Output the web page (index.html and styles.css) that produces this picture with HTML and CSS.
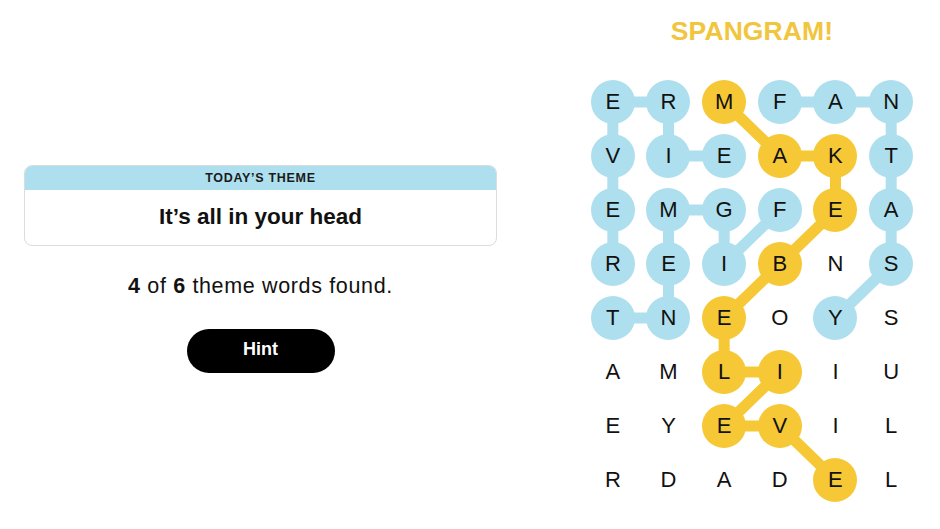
FILE: index.html
```html
<!DOCTYPE html>
<html lang="en">
<head>
<meta charset="utf-8">
<title>Strands</title>
<link rel="stylesheet" href="styles.css">
</head>
<body>
<main class="page">
  <section class="side">
    <div class="theme-card">
      <div class="theme-head">TODAY’S THEME</div>
      <div class="theme-body">It’s all in your head</div>
    </div>
    <p class="progress"><b>4</b> of <b>6</b> theme words found.</p>
    <button class="hint" type="button">Hint</button>
  </section>
  <section class="board">
    <h2 class="found-label">SPANGRAM!</h2>
    <div class="grid-wrap">
      <svg class="links" viewBox="0 0 334 432" width="334" height="432" aria-hidden="true">
        <g fill="none" stroke-width="11" stroke-linejoin="round" stroke-linecap="round">
          <polyline class="ln-blue" points="27.83,189 27.83,135 27.83,81 27.83,27 83.5,27 83.5,81 139.17,81"/>
          <polyline class="ln-blue" points="194.83,135 139.17,189 139.17,135 83.5,135 83.5,189 83.5,243 27.83,243"/>
          <polyline class="ln-blue" points="194.83,27 250.5,27 306.17,27 306.17,81 306.17,135 306.17,189 250.5,243"/>
          <polyline class="ln-gold" points="139.17,27 194.83,81 250.5,81 250.5,135 194.83,189 139.17,243 139.17,297 194.83,297 139.17,351 194.83,351 250.5,405"/>
        </g>
      </svg>
      <div class="grid">
        <span class="cell blue">E</span><span class="cell blue">R</span><span class="cell gold">M</span><span class="cell blue">F</span><span class="cell blue">A</span><span class="cell blue">N</span>
        <span class="cell blue">V</span><span class="cell blue">I</span><span class="cell blue">E</span><span class="cell gold">A</span><span class="cell gold">K</span><span class="cell blue">T</span>
        <span class="cell blue">E</span><span class="cell blue">M</span><span class="cell blue">G</span><span class="cell blue">F</span><span class="cell gold">E</span><span class="cell blue">A</span>
        <span class="cell blue">R</span><span class="cell blue">E</span><span class="cell blue">I</span><span class="cell gold">B</span><span class="cell">N</span><span class="cell blue">S</span>
        <span class="cell blue">T</span><span class="cell blue">N</span><span class="cell gold">E</span><span class="cell">O</span><span class="cell blue">Y</span><span class="cell">S</span>
        <span class="cell">A</span><span class="cell">M</span><span class="cell gold">L</span><span class="cell gold">I</span><span class="cell">I</span><span class="cell">U</span>
        <span class="cell">E</span><span class="cell">Y</span><span class="cell gold">E</span><span class="cell gold">V</span><span class="cell">I</span><span class="cell">L</span>
        <span class="cell">R</span><span class="cell">D</span><span class="cell">A</span><span class="cell">D</span><span class="cell gold">E</span><span class="cell">L</span>
      </div>
    </div>
  </section>
</main>
</body>
</html>
```
FILE: styles.css
```css
* { box-sizing: border-box; }
html, body { margin: 0; padding: 0; background: #fff; }
body {
  font-family: "Liberation Sans", Arial, sans-serif;
  color: #121212;
  width: 940px;
  height: 529px;
  overflow: hidden;
}
.page {
  display: flex;
  height: 529px;
}
.side {
  width: 521px;
  padding: 165px 24px 0;
  display: flex;
  flex-direction: column;
  align-items: center;
}
.theme-card {
  width: 473px;
  border: 1px solid #dcdcdc;
  border-radius: 8px;
  overflow: hidden;
}
.theme-head {
  background: #aedfee;
  height: 24px;
  line-height: 25px;
  text-align: center;
  font-size: 12.5px;
  font-weight: 700;
  letter-spacing: 0.7px;
  color: #1a1a1a;
}
.theme-body {
  height: 55px;
  line-height: 54px;
  text-align: center;
  font-size: 22.5px;
  font-weight: 700;
  color: #111;
}
.progress {
  margin: 26px 0 0;
  font-size: 21.5px;
  line-height: 28px;
  color: #111;
  letter-spacing: 0.65px;
}
.progress b { font-weight: 700; }
.hint {
  margin-top: 29px;
  width: 148px;
  height: 44px;
  border: none;
  border-radius: 22px;
  background: #000;
  color: #fff;
  font-family: "Liberation Sans", Arial, sans-serif;
  font-size: 18px;
  font-weight: 700;
  padding: 0 0 3px;
}
.board {
  margin-left: 64px;
  width: 334px;
  display: flex;
  flex-direction: column;
  align-items: center;
}
.found-label {
  margin: 16px 0 0;
  height: 59px;
  font-size: 26.5px;
  line-height: 31px;
  font-weight: 700;
  color: #f1c53d;
  letter-spacing: 0.1px;
}
.grid-wrap {
  position: relative;
  width: 334px;
  height: 432px;
}
.links {
  position: absolute;
  left: 0;
  top: 0;
}
.ln-blue { stroke: #aedfee; }
.ln-gold { stroke: #f6c836; }
.grid {
  position: relative;
  display: grid;
  grid-template-columns: repeat(6, 55.667px);
  grid-template-rows: repeat(8, 54px);
}
.cell {
  justify-self: center;
  align-self: center;
  width: 44px;
  height: 44px;
  border-radius: 50%;
  display: flex;
  align-items: center;
  justify-content: center;
  font-size: 22px;
  color: #111;
}
.cell.blue { background: #aedfee; }
.cell.gold { background: #f6c836; }
```
